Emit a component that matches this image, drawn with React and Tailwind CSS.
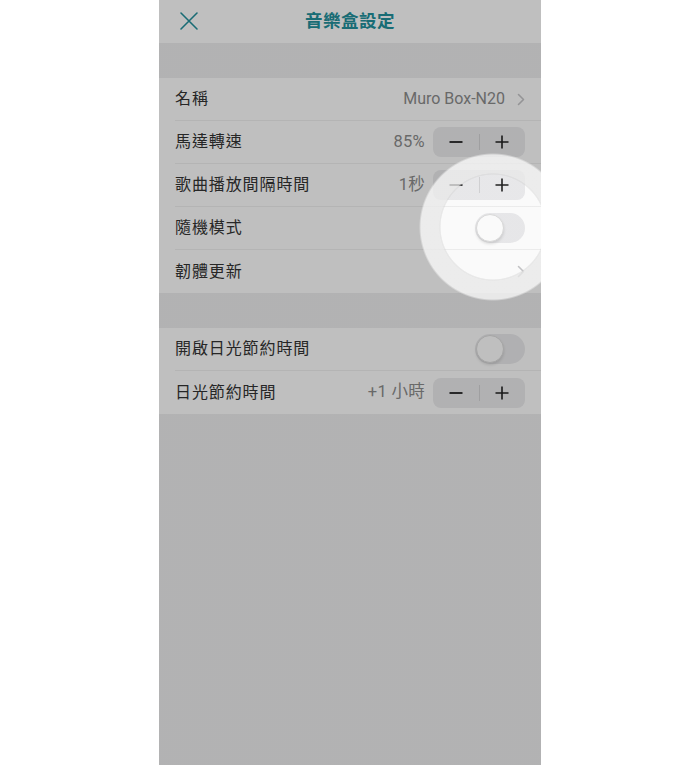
import React from 'react';

const TEAL = '#22909c';

function CloseIcon() {
  return (
    <svg width="20" height="20" viewBox="0 0 20 20" fill="none">
      <path d="M2 2L18 18M18 2L2 18" stroke={TEAL} strokeWidth="1.6" strokeLinecap="round" />
    </svg>
  );
}

function Chevron() {
  return (
    <svg width="8" height="13" viewBox="0 0 8 13" fill="none">
      <path d="M1.5 1.5L6.5 6.5L1.5 11.5" stroke="#c6c6c8" strokeWidth="1.6" strokeLinecap="round" strokeLinejoin="round" />
    </svg>
  );
}

function Stepper() {
  return (
    <div className="flex items-center h-[30px] w-[92px] rounded-[8px] bg-[#ececee]">
      <button className="flex-1 flex items-center justify-center h-full">
        <svg width="14" height="14" viewBox="0 0 14 14" fill="none">
          <path d="M0.5 7H13.5" stroke="#222" strokeWidth="1.8" />
        </svg>
      </button>
      <span className="w-px h-[16px] bg-[#d4d4d6]" />
      <button className="flex-1 flex items-center justify-center h-full">
        <svg width="14" height="14" viewBox="0 0 14 14" fill="none">
          <path d="M0.5 7H13.5M7 0.5V13.5" stroke="#222" strokeWidth="1.6" />
        </svg>
      </button>
    </div>
  );
}

function Toggle() {
  return (
    <div className="relative w-[50px] h-[30px] rounded-full bg-[#ebebed]">
      <div className="absolute left-[1px] top-[1px] w-[28px] h-[28px] rounded-full bg-white border border-[#dcdcdc] shadow-[0_2px_3px_rgba(0,0,0,0.12)]" />
    </div>
  );
}

function Row({ label, children, last }) {
  return (
    <div className="flex items-center h-[43px] pl-4 bg-white">
      <div className={`flex items-center h-full flex-1 pr-4 ${last ? '' : 'border-b border-[#f0f0f0]'}`}>
        <span className="flex-1 text-[16px] tracking-[0.9px] text-[#333]">{label}</span>
        {children}
      </div>
    </div>
  );
}

function Value({ children }) {
  return <span className="text-[16.5px] tracking-[0.3px] text-[#8c8c8c] mr-2">{children}</span>;
}

export default function App() {
  return (
    <div className="w-full h-[765px] flex justify-center bg-white font-['Roboto','Noto_Sans_CJK_TC',sans-serif]">
      <div className="relative w-[382px] h-[765px] overflow-hidden bg-[#eeeeef]">
        <header className="relative flex items-center justify-center h-[43px] bg-white">
          <button className="absolute left-[20px] top-[11px]">
            <CloseIcon />
          </button>
          <h1 className="text-[17.5px] font-bold tracking-[0.5px]" style={{ color: TEAL }}>音樂盒設定</h1>
        </header>

        <div className="h-[35px]" />

        <section>
          <Row label="名稱">
            <span className="text-[16px] text-[#8c8c8c] mr-3">Muro Box-N20</span>
            <Chevron />
          </Row>
          <Row label="馬達轉速">
            <Value>85%</Value>
            <Stepper />
          </Row>
          <Row label="歌曲播放間隔時間">
            <Value>1秒</Value>
            <Stepper />
          </Row>
          <Row label="隨機模式">
            <Toggle />
          </Row>
          <Row label="韌體更新" last>
            <Chevron />
          </Row>
        </section>

        <div className="h-[35px]" />

        <section>
          <Row label="開啟日光節約時間">
            <Toggle />
          </Row>
          <Row label="日光節約時間" last>
            <Value>+1 小時</Value>
            <Stepper />
          </Row>
        </section>

        {/* dimmed backdrop with a spotlight on the shuffle toggle */}
        <div className="pointer-events-none absolute inset-0 bg-[radial-gradient(circle_at_334px_227px,rgba(0,0,0,0.02)_52px,rgba(0,0,0,0.25)_54px)]" />
        <div className="pointer-events-none absolute inset-0 bg-[radial-gradient(circle_at_334px_227px,transparent_52px,rgba(255,255,255,0.7)_54px,rgba(255,255,255,0.7)_72px,transparent_74px)]" />
      </div>
    </div>
  );
}
